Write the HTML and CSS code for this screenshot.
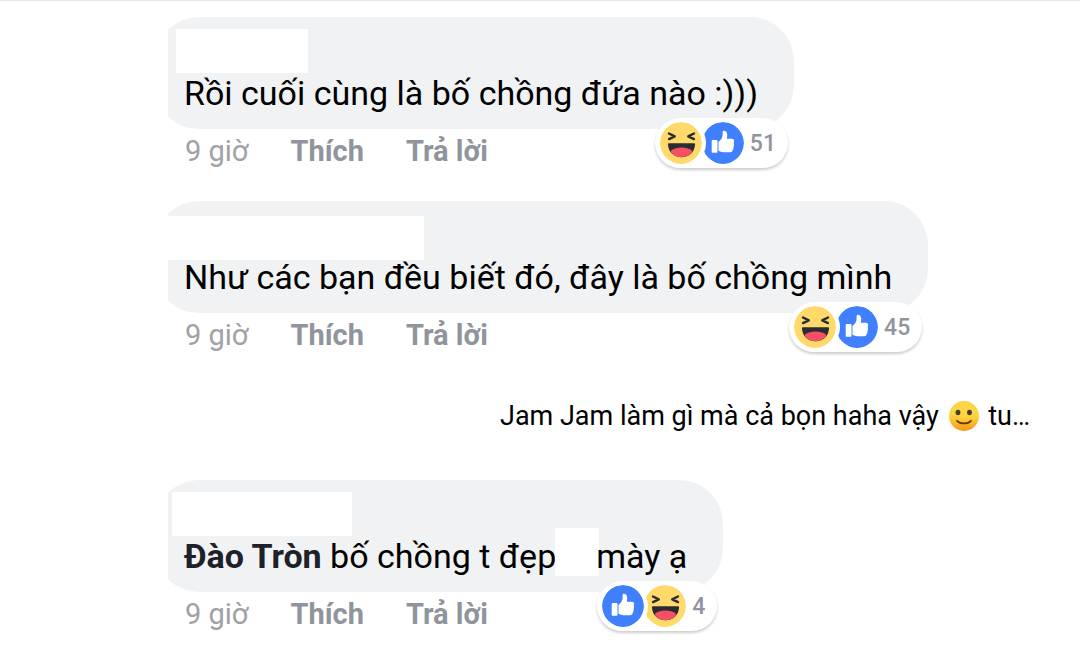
FILE: index.html
```html
<!DOCTYPE html>
<html lang="vi">
<head>
  <meta charset="UTF-8">
  <meta name="viewport" content="width=device-width, initial-scale=1.0">
  <title>Bình luận</title>
  <link rel="stylesheet" href="styles.css">
</head>
<body>
  <!-- Biểu tượng dùng chung -->
  <svg class="sprite" aria-hidden="true">
    <symbol id="icon-haha" viewBox="0 0 42 42">
      <circle cx="21" cy="21" r="21" fill="#ffda6b"/>
      <path d="M9 11.500L14.800 14.300L9 17.100M34 11.500L28.200 14.300L34 17.100" fill="none" stroke="#2b2b33" stroke-width="2.400" stroke-linecap="round" stroke-linejoin="round"/>
      <path d="M8 22.300C8 21.600 8.400 21.200 9 21.200H34C34.600 21.200 35 21.600 35 22.300C34.800 30 29.500 35.200 21.500 35.200C13.500 35.200 8.200 30 8 22.300Z" fill="#2b2b33"/>
      <path d="M10.500 29.300C13 26.600 16.500 25.500 21.500 25.500C26.500 25.500 30 26.600 32.500 29.300C30.400 33 26.600 35.200 21.500 35.200C16.400 35.200 12.600 33 10.500 29.300Z" fill="#f55064"/>
    </symbol>
    <symbol id="icon-like" viewBox="0 0 42 42">
      <circle cx="21" cy="21" r="21" fill="#4080ff"/>
      <rect x="9.700" y="18" width="5.800" height="12.700" rx="1" fill="#fff"/>
      <path d="M16.500 19.800C19 18 20.200 16 20.600 13.500V10.300C20.600 9.200 21.300 8.600 22.300 8.800C24.500 9.200 25.500 11.200 25.200 14L24.800 16.800H29.800C31.400 16.800 32.400 18 32.100 19.400C32 20.100 31.800 20.600 31.500 21C32.200 22 32.200 23.400 31.500 24.400C31.800 25.500 31.500 26.700 30.800 27.400C30.700 29.200 29.800 30.200 28 30.200H21.500C19.500 30.200 18 29.600 16.500 28.800Z" fill="#fff"/>
    </symbol>
  </svg>

  <main class="thread">
    <article class="comment">
      <div class="bubble">
        <div class="name name-short"></div>
        <p class="text">Rồi cuối cùng là bố chồng đứa nào :)))</p>
        <button class="reactions" type="button">
          <svg class="reaction"><use href="#icon-haha"/></svg>
          <svg class="reaction reaction-under"><use href="#icon-like"/></svg>
          <span>51</span>
        </button>
      </div>
      <div class="actions">
        <time>9 giờ</time>
        <button type="button">Thích</button>
        <button type="button">Trả lời</button>
      </div>
    </article>

    <article class="comment">
      <div class="bubble">
        <div class="name name-long"></div>
        <p class="text">Như các bạn đều biết đó, đây là bố chồng mình</p>
        <button class="reactions" type="button">
          <svg class="reaction"><use href="#icon-haha"/></svg>
          <svg class="reaction reaction-under"><use href="#icon-like"/></svg>
          <span>45</span>
        </button>
      </div>
      <div class="actions">
        <time>9 giờ</time>
        <button type="button">Thích</button>
        <button type="button">Trả lời</button>
      </div>
    </article>

    <p class="reply-preview">
      Jam Jam làm gì mà cả bọn haha vậy
      <svg class="smile" viewBox="0 0 30 30" role="img" aria-label="🙂">
        <defs>
          <linearGradient id="smile-fill" x1="0" y1="0" x2="0" y2="1">
            <stop offset="0" stop-color="#fbd44a"/>
            <stop offset="0.5" stop-color="#fdd63f"/>
            <stop offset="1" stop-color="#f99417"/>
          </linearGradient>
        </defs>
        <circle cx="15" cy="15" r="15" fill="url(#smile-fill)"/>
        <ellipse cx="9" cy="11.500" rx="2.400" ry="2.800" fill="#473c35"/>
        <ellipse cx="20.500" cy="11.500" rx="2.400" ry="2.800" fill="#473c35"/>
        <path d="M8 19.800C11.500 23.300 18.500 23.300 22 19.800" fill="none" stroke="#6b3a12" stroke-width="1.800" stroke-linecap="round"/>
      </svg>
      tu…
    </p>

    <article class="comment">
      <div class="bubble">
        <div class="name name-medium"></div>
        <p class="text"><a href="#">Đào Tròn</a> bố chồng t đẹp<span class="blank"></span>mày ạ</p>
        <button class="reactions" type="button">
          <svg class="reaction"><use href="#icon-like"/></svg>
          <svg class="reaction reaction-under"><use href="#icon-haha"/></svg>
          <span>4</span>
        </button>
      </div>
      <div class="actions">
        <time>9 giờ</time>
        <button type="button">Thích</button>
        <button type="button">Trả lời</button>
      </div>
    </article>
  </main>
</body>
</html>
```

FILE: styles.css
```css
* {
  margin: 0;
  padding: 0;
  box-sizing: border-box;
}

body {
  font-family: Roboto, "Noto Sans", sans-serif;
  background-color: #fff;
  color: #000;
  border-top: 1px solid #e5e6e8;
}

button {
  font: inherit;
  color: inherit;
  background: none;
  border: none;
  cursor: pointer;
}

.sprite {
  display: none;
}

/* Danh sách bình luận, cắt mép trái của bong bóng */
.thread {
  display: flex;
  flex-direction: column;
  gap: 30px;
  margin-left: 168px;
  padding: 16px 50px 16px 0;
  overflow: hidden;
}

.comment {
  display: flex;
  flex-direction: column;
  align-items: flex-start;
  margin-left: -13px;
}

.bubble {
  position: relative;
  padding: 12px 36px 16px 29px;
  background-color: #f1f2f4;
  border-radius: 44px;
}

/* Tên người dùng đã che */
.name {
  height: 44px;
  background-color: #fff;
}

.name-short {
  width: 132px;
  margin-left: -8px;
}

.name-medium {
  width: 180px;
  margin-left: -12px;
}

.name-long {
  width: 256px;
  margin: 3px 0 -3px -16px;
}

.text {
  font-size: 34px;
  line-height: 40px;
}

.text a {
  color: #1d2129;
  font-weight: bold;
  text-decoration: none;
}

.blank {
  display: inline-block;
  width: 44px;
  height: 48px;
  margin: -8px -3px 0 -1px;
  vertical-align: bottom;
  background-color: #fff;
}

/* Cảm xúc */
.reactions {
  position: absolute;
  right: 6px;
  bottom: -39px;
  display: flex;
  align-items: center;
  height: 50px;
  padding: 0 12px 0 5px;
  background-color: #fff;
  border-radius: 25px;
  box-shadow: 0 2px 3px rgba(0, 0, 0, 0.2);
  color: #90949c;
  font-size: 23px;
  font-weight: 500;
}

.reaction {
  position: relative;
  z-index: 1;
  width: 42px;
  height: 42px;
  border-radius: 50%;
  box-shadow: 0 0 0 4px #fff;
}

.reaction-under {
  z-index: 0;
  margin-right: 6px;
  box-shadow: none;
}

.actions {
  display: flex;
  gap: 42px;
  padding: 3px 0 1px 30px;
  color: #90949c;
  font-size: 29px;
  line-height: 38px;
}

.actions time {
  color: #a0a2a5;
}

.actions button {
  font-weight: bold;
}

.reply-preview {
  padding-bottom: 2px;
  font-size: 27px;
  line-height: 63px;
  text-align: right;
  white-space: nowrap;
}

.smile {
  width: 30px;
  height: 30px;
  margin: 0 3px;
  vertical-align: -6px;
}
```
